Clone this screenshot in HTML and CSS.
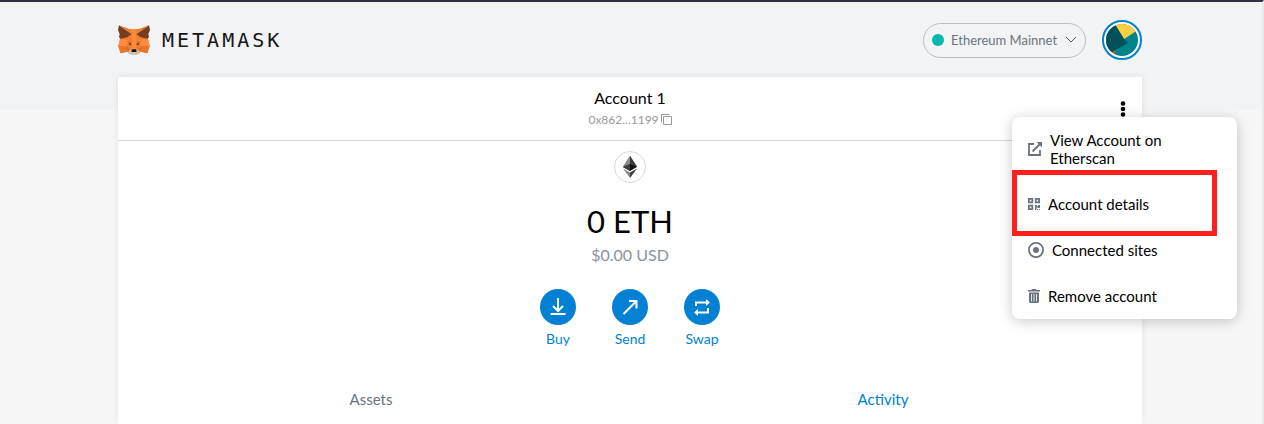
FILE: index.html
```html
<!DOCTYPE html>
<html lang="en">
<head>
<meta charset="utf-8">
<title>MetaMask</title>
<link rel="stylesheet" href="styles.css">
</head>
<body>
<div class="page">
  <header class="header">
    <div class="header-inner">
      <a class="logo" href="#">
        <svg class="fox" viewBox="0 0 96 90" aria-hidden="true">
          <path fill="#f0802f" d="M34 12h28l28 28 1 7 4 16-7 22-19-5-10 8H37l-10-8-19 5L1 63l4-16 1-7z"/>
          <path fill="#ff8b3d" d="M40 12h16l-3 40 3 22H40l3-22zM6 42l30 4-11 17H1zM90 42l-30 4 11 17h24z"/>
          <path fill="#e8752a" d="M1 63h25l1 17-19 5zM95 63H70l-1 17 19 5z"/>
          <path fill="#763d20" d="M3 1 41 27 28 37 8 41 3 37l2-10L0 15zM93 1 55 27l13 10 20 4 5-4-2-10 5-12z"/>
          <path fill="#ee7c32" d="M3 1l31 11 6 15zM93 1 62 12l-6 15z"/>
          <path fill="#cf6330" d="M25 49l13 1 3 10zM71 49l-13 1-3 10zM26 64l10 12-7 3zM70 64 60 76l7 3z"/>
          <path fill="#41414f" d="M32 54l7 2 1 5-6-2zM64 54l-7 2-1 5 6-2z"/>
          <path fill="#d3c0b5" d="M29 79l12-5h14l12 5-10 10H39z"/>
          <path fill="#161616" d="M42 73h12l2 8H40z"/>
        </svg>
        <span class="wordmark">METAMASK</span>
      </a>
      <div class="header-tools">
        <label class="network">
          <span class="network-dot"></span>
          <select class="network-select" aria-label="Network"><option>Ethereum Mainnet</option></select>
          <svg class="chevron" viewBox="0 0 12 8" aria-hidden="true"><path d="M1 1l5 5 5-5"/></svg>
        </label>
        <button class="avatar" aria-label="Account menu">
          <svg viewBox="0 0 32 32" aria-hidden="true">
            <clipPath id="disc"><circle cx="16" cy="16" r="16"/></clipPath>
            <g clip-path="url(#disc)">
              <path fill="#00848c" d="M0 0h32v32H0z"/>
              <path fill="#fc4a1f" d="M0 24l8 2 2 6H0z"/>
              <path fill="#f9d043" d="M8 0h24v6L18 15z"/>
              <path fill="#02505a" d="M0 0h9l9 15 4 4L6 28 0 24z"/>
            </g>
          </svg>
        </button>
      </div>
    </div>
  </header>

  <main class="card">
    <div class="account-bar">
      <button class="account">
        <span class="account-name">Account 1</span>
        <span class="account-address">0x862...1199
          <svg class="copy" viewBox="0 0 11 11" aria-hidden="true"><path d="M2.500 2.500h8v8h-8zM.5 8.500v-8h8"/></svg>
        </span>
      </button>
      <button class="more" aria-label="Account options">
        <svg viewBox="0 0 6 16" aria-hidden="true"><circle cx="3" cy="2.500" r="2.300"/><circle cx="3" cy="8" r="2.300"/><circle cx="3" cy="13.500" r="2.300"/></svg>
      </button>
      <div class="menu">
        <button class="menu-item">
          <svg class="icon-link" viewBox="0 0 14 14" aria-hidden="true"><path fill="none" stroke="currentColor" stroke-width="1.800" d="M6 2H1v11h11V8M4.500 9.500 12 2"/><path fill="currentColor" d="M8.500 0H14v5.500z"/></svg>
          <span>View Account on Etherscan</span>
        </button>
        <button class="menu-item">
          <svg class="icon-small" viewBox="0 0 12 12" aria-hidden="true"><path fill="none" stroke="currentColor" stroke-width="1.800" d="M.9.9h3.400v3.400H.9zM7.700.9h3.400v3.400H7.700zM.9 7.700h3.400v3.400H.9z"/><path fill="currentColor" d="M7 7h2v1h1V7h2v3h-2V9.500H8.500V12H7zM9 11h1v1H9zM11 11h1v1h-1z"/></svg>
          <span>Account details</span>
        </button>
        <button class="menu-item">
          <svg class="icon-large" viewBox="0 0 16 16" aria-hidden="true"><circle cx="8" cy="8" r="7.100" fill="none" stroke="currentColor" stroke-width="1.800"/><circle cx="8" cy="8" r="3" fill="currentColor"/></svg>
          <span>Connected sites</span>
        </button>
        <button class="menu-item">
          <svg class="icon-small icon-trash" viewBox="0 0 12 14" aria-hidden="true"><path fill="currentColor" fill-rule="evenodd" d="M0 1h3.500L4.200 0h3.600l.7 1H12v1.500H0zM1 3.500h10V13l-1 1H2l-1-1zM3.200 5v7.500h.8V5zM5.600 5v7.500h.8V5zM8 5v7.500h.8V5z"/></svg>
          <span>Remove account</span>
        </button>
        <div class="highlight"></div>
      </div>
    </div>

    <section class="overview">
      <div class="token">
        <svg viewBox="0 0 14 22" aria-hidden="true"><path fill="#343434" d="M7 0v15L0 11z"/><path fill="#141414" d="M7 0v15l7-4z"/><path fill="#8c8c8c" d="M7 0v8L0 11z"/><path fill="#393939" d="M7 0v8l7 3z"/><path fill="#3c3c3b" d="M7 8v7l-7-4z"/><path fill="#8c8c8c" d="M0 12.500 7 22v-5.500z"/><path fill="#3c3c3b" d="M14 12.500 7 22v-5.500z"/></svg>
      </div>
      <div class="balance">0 ETH</div>
      <div class="fiat">$0.00 USD</div>
      <div class="actions">
        <button class="action">
          <span class="action-disc"><svg viewBox="0 0 18 18" aria-hidden="true"><path d="M1.500 16h15M9 0v12M4 8l5 5 5-5"/></svg></span>
          Buy
        </button>
        <button class="action">
          <span class="action-disc"><svg viewBox="0 0 18 18" aria-hidden="true"><path d="M2.500 16 15 3.500M8 3h7.500v7.500"/></svg></span>
          Send
        </button>
        <button class="action">
          <span class="action-disc"><svg viewBox="0 0 18 18" aria-hidden="true"><path d="M3 8V4.500h11M15 10v4.500H4"/><path class="solid" d="M13 1l4 3.500L13 8zM5 11l-4 3.500L5 18z"/></svg></span>
          Swap
        </button>
      </div>
    </section>

    <nav class="tabs">
      <button class="tab">Assets</button>
      <button class="tab tab-active">Activity</button>
    </nav>
  </main>
</div>
</body>
</html>
```
FILE: styles.css
```css
* {
  box-sizing: border-box;
}

body {
  margin: 0;
  background: #f7f7f7;
  color: #000;
  font-family: Lato, "Liberation Sans", sans-serif;
  overflow: hidden;
}

button {
  padding: 0;
  border: 0;
  background: none;
  color: inherit;
  font: inherit;
  cursor: pointer;
}

svg {
  display: block;
  flex: none;
}

.page {
  min-height: 100vh;
  padding-right: 2px;
  border-top: 2px solid #2f3042;
  border-right: 2px solid #e8e9eb;
}

.header {
  margin-right: -2px;
  padding: 18px 26px 49px 24px;
  background: #f2f3f4;
}

.header-inner {
  display: flex;
  align-items: center;
  justify-content: space-between;
  max-width: 1024px;
  margin: 0 auto;
}

.logo {
  display: flex;
  align-items: center;
  gap: 12px;
  color: #161616;
  text-decoration: none;
}

.fox {
  width: 32px;
  height: 30px;
}

.wordmark {
  font: 20px/30px "DejaVu Sans Mono", monospace;
  letter-spacing: 3px;
}

.header-tools {
  display: flex;
  align-items: center;
  gap: 16px;
}

.network {
  display: flex;
  align-items: center;
  gap: 7px;
  height: 35px;
  padding: 0 8px;
  border: 1px solid #bbc0c5;
  border-radius: 18px;
}

.network-dot {
  width: 12px;
  height: 12px;
  border-radius: 50%;
  background: #04b6b0;
}

.network-select {
  appearance: none;
  padding: 0;
  border: 0;
  background: none;
  color: #6a737d;
  font: 13px/18px Lato, "Liberation Sans", sans-serif;
}

.chevron {
  width: 12px;
  height: 8px;
  fill: none;
  stroke: #535a61;
}

.avatar {
  padding: 2px;
  width: 40px;
  height: 40px;
  border: 2px solid #0280d3;
  border-radius: 50%;
  background: #fff;
}

.card {
  max-width: 1024px;
  min-height: 347px;
  margin: -32px auto 0;
  background: #fff;
  box-shadow: 0 0 8px rgba(0, 0, 0, 0.08);
}

.account-bar {
  position: relative;
  display: grid;
  grid-template-columns: 1fr auto 1fr;
  align-items: center;
  height: 64px;
  border-bottom: 1px solid #d6d9dc;
}

.account {
  grid-column: 2;
  display: grid;
  justify-items: center;
}

.account-name {
  font-size: 16px;
  line-height: 22px;
}

.account-address {
  display: flex;
  align-items: center;
  gap: 2px;
  color: #989a9b;
  font-size: 12px;
  line-height: 22px;
}

.copy {
  width: 11px;
  height: 11px;
  fill: none;
  stroke: currentColor;
}

.more {
  justify-self: end;
  padding-right: 16px;
}

.more svg {
  width: 6px;
  height: 16px;
}

.menu {
  position: absolute;
  z-index: 1;
  top: 40px;
  right: -95px;
  width: 225px;
  border-radius: 8px;
  background: #fff;
  box-shadow: 0 2px 14px rgba(0, 0, 0, 0.22);
}

.menu-item {
  display: flex;
  align-items: center;
  gap: 8px;
  width: 100%;
  padding: 14px 16px;
  font-size: 15px;
  line-height: 18px;
  text-align: left;
}

.menu-item span {
  max-width: 130px;
}

.menu-item svg {
  color: #6a737d;
}

.icon-link {
  width: 14px;
  height: 14px;
}

.icon-small {
  width: 12px;
  height: 12px;
}

.icon-trash {
  height: 14px;
}

.icon-large {
  width: 16px;
  height: 16px;
}

.highlight {
  position: absolute;
  top: 53px;
  left: 0;
  width: 205px;
  height: 66px;
  border: 5px solid #ff1f1c;
  pointer-events: none;
}

.overview {
  display: flex;
  flex-direction: column;
  align-items: center;
  padding-top: 10px;
}

.token {
  display: grid;
  place-items: center;
  width: 32px;
  height: 32px;
  border: 1px solid #d6d9dc;
  border-radius: 50%;
}

.token svg {
  width: 14px;
  height: 22px;
}

.balance {
  margin-top: 16px;
  font-size: 31px;
  line-height: 44px;
}

.fiat {
  color: #8b939b;
  font-size: 16px;
  line-height: 24px;
}

.actions {
  display: flex;
  margin-top: 22px;
}

.action {
  display: grid;
  justify-items: center;
  gap: 4px;
  width: 72px;
  color: #0280d3;
  font-size: 14px;
  line-height: 20px;
}

.action-disc {
  display: grid;
  place-items: center;
  width: 36px;
  height: 36px;
  border-radius: 50%;
  background: #0280d3;
}

.action svg {
  width: 18px;
  height: 18px;
  fill: none;
  stroke: #fff;
  stroke-width: 2;
}

.action .solid {
  fill: #fff;
  stroke: none;
}

.tabs {
  display: grid;
  grid-template-columns: 1fr 1fr;
  margin-top: 30px;
}

.tab {
  padding: 8px 6px 8px 0;
  color: #6a737d;
  font-size: 15px;
  line-height: 24px;
}

.tab-active {
  color: #0280d3;
}
```
